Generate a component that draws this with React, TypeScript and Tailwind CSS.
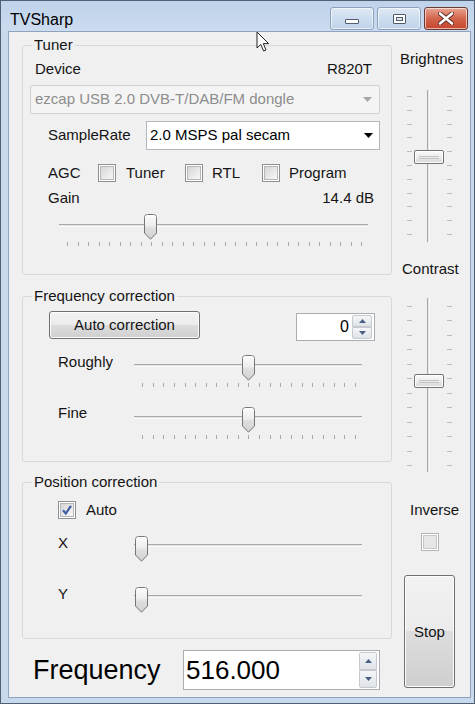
import React from "react";

// TVSharp main window, Vista basic look

function Thumb() {
  return (
    <svg width="13" height="26" viewBox="0 0 13 26" className="block">
      <defs>
        <linearGradient id="thumbFill" x1="0" y1="0" x2="0" y2="1">
          <stop offset="0" stopColor="#fbfbfb" />
          <stop offset="0.45" stopColor="#eeeeee" />
          <stop offset="0.55" stopColor="#dedede" />
          <stop offset="1" stopColor="#d2d2d2" />
        </linearGradient>
      </defs>
      <path
        d="M0.5 3.5 Q0.5 0.5 3.5 0.5 H9.5 Q12.5 0.5 12.5 3.5 V19 L6.5 25.2 L0.5 19 Z"
        fill="url(#thumbFill)"
        stroke="#767676"
      />
      <path d="M1.5 3.5 Q1.5 1.5 3.5 1.5 H9.5 Q11.5 1.5 11.5 3.5" fill="none" stroke="#ffffff" />
    </svg>
  );
}

function HSlider({
  className,
  ratio,
  ticks,
  trackTop,
}: {
  className: string;
  ratio: number;
  ticks: number;
  trackTop: number;
}) {
  return (
    <div className={"relative " + className}>
      <div
        className="absolute left-0 right-0 h-[3px] border-t border-[#a9a9a9] bg-[#e4e4e4] border-b border-b-[#fafafa]"
        style={{ top: trackTop }}
      />
      <div className="absolute top-0" style={{ left: `calc(8px + (100% - 14px) * ${ratio} - 7.5px)` }}>
        <Thumb />
      </div>
      {ticks > 0 && (
        <div className="absolute left-[8px] right-[6px] top-[28px] flex justify-between">
          {Array.from({ length: ticks }).map((_, i) => (
            <span key={i} className="h-[4px] w-[1px] bg-[#a8a8a8]" />
          ))}
        </div>
      )}
    </div>
  );
}

function VSlider({
  className,
  thumbTop,
  ticks,
  tickTop,
  tickBottom,
}: {
  className: string;
  thumbTop: number;
  ticks: number;
  tickTop: number;
  tickBottom: number;
}) {
  const marks = Array.from({ length: ticks });
  return (
    <div className={"relative w-[45px] " + className}>
      <div className="absolute bottom-0 left-[20px] top-0 w-[3px] border-l border-[#a9a9a9] bg-[#e4e4e4] border-r border-r-[#fafafa]" />
      <div className="absolute left-0 flex w-[5px] flex-col justify-between" style={{ top: tickTop, bottom: tickBottom }}>
        {marks.map((_, i) => (
          <span key={i} className="h-[1px] w-[5px] bg-[#bcbcbc]" />
        ))}
      </div>
      <div className="absolute left-[40px] flex w-[5px] flex-col justify-between" style={{ top: tickTop, bottom: tickBottom }}>
        {marks.map((_, i) => (
          <span key={i} className="h-[1px] w-[5px] bg-[#bcbcbc]" />
        ))}
      </div>
      <div
        className="absolute left-[7px] flex h-[14px] w-[30px] items-center justify-center rounded-[2px] border border-[#727272] bg-gradient-to-b from-[#fafafa] via-[#ececec] to-[#d6d6d6] shadow-[inset_0_0_0_1px_#ffffff]"
        style={{ top: thumbTop }}
      >
        <span className="h-[3px] w-[20px] border-y border-[#c4c4c4]" />
      </div>
    </div>
  );
}

function CheckBox({ checked, disabled }: { checked?: boolean; disabled?: boolean }) {
  return (
    <span
      className={
        "relative flex h-[18px] w-[18px] shrink-0 items-center justify-center border bg-white " +
        (disabled ? "border-[#b5b5b5]" : "border-[#8e8f8f]")
      }
    >
      <span
        className={
          "h-[14px] w-[14px] border " +
          (disabled
            ? "border-[#c9c9c9] bg-[#e6e6e6]"
            : "border-[#b3b8bd] bg-gradient-to-br from-[#d6d6d6] to-[#f7f7f7]")
        }
      />
      {checked && (
        <svg width="14" height="14" viewBox="0 0 14 14" className="absolute left-[1px] top-[1px]">
          <path d="M3 7.2 L5.8 10.5 L11 2.8" fill="none" stroke="#3f5ea4" strokeWidth="2.2" />
        </svg>
      )}
    </span>
  );
}

function GroupBox({
  title,
  className,
  children,
}: {
  title: string;
  className: string;
  children: React.ReactNode;
}) {
  return (
    <div className={"relative rounded-[3px] border border-[#d6dadd] " + className}>
      <span className="absolute left-[9px] top-[-10px] bg-[#f0f0f0] px-[2px] leading-[18px]">{title}</span>
      {children}
    </div>
  );
}

function Arrow({ color }: { color: string }) {
  return (
    <svg width="9" height="5" viewBox="0 0 9 5">
      <path d="M0 0 H9 L4.5 5 Z" fill={color} />
    </svg>
  );
}

function SpinHalf({ up, className }: { up?: boolean; className: string }) {
  return (
    <div
      className={
        "flex flex-1 items-center justify-center border border-[#c6cad0] bg-gradient-to-b from-[#f4f6f8] to-[#dfe3e8] " +
        className
      }
    >
      <svg width="7" height="4" viewBox="0 0 7 4">
        <path d={up ? "M0 4 L3.5 0 L7 4 Z" : "M0 0 L3.5 4 L7 0 Z"} fill="#4a5f86" />
      </svg>
    </div>
  );
}

function CaptionButton({ kind }: { kind: "min" | "max" | "close" }) {
  const base = "flex h-[23px] items-center justify-center rounded-[3px] border shadow-[inset_0_0_0_1px_rgba(255,255,255,0.6)] ";
  if (kind === "close") {
    return (
      <div className={base + "w-[44px] border-[#6d3a32] bg-gradient-to-b from-[#e8a593] via-[#d3654c] to-[#c5452c]"}>
        <svg width="16" height="13" viewBox="0 0 16 13">
          <path d="M2 1.5 L14 11.5 M14 1.5 L2 11.5" stroke="#5a2a22" strokeWidth="4.4" strokeLinecap="round" />
          <path d="M2 1.5 L14 11.5 M14 1.5 L2 11.5" stroke="#ffffff" strokeWidth="2.6" strokeLinecap="round" />
        </svg>
      </div>
    );
  }
  return (
    <div className={base + "w-[44px] border-[#8da2bc] bg-gradient-to-b from-[#dfe9f5] via-[#cddcee] to-[#c2d3e9]"}>
      {kind === "min" ? (
        <span className="mt-[6px] h-[5px] w-[14px] rounded-[1px] border border-[#505b6a] bg-white" />
      ) : (
        <span className="flex h-[10px] w-[13px] items-center justify-center rounded-[1px] border border-[#505b6a] bg-white">
          <span className="h-[4px] w-[7px] border border-[#505b6a] bg-[#dfe7f1]" />
        </span>
      )}
    </div>
  );
}

function WinButton({ className, children }: { className: string; children: React.ReactNode }) {
  return (
    <div
      className={
        "flex items-center justify-center rounded-[3px] border border-[#707070] bg-[linear-gradient(#f2f2f2_0%,#ebebeb_50%,#dddddd_50%,#cfcfcf_100%)] shadow-[inset_0_0_0_1px_#fcfcfc] " +
        className
      }
    >
      {children}
    </div>
  );
}

export default function App() {
  return (
    <div className="relative flex h-[704px] w-[475px] flex-col overflow-hidden border border-[#4f6072] bg-[#c8d9ed] font-['Liberation_Sans',Arial,sans-serif] text-[15px] text-[#141414]">
      {/* Title bar */}
      <div className="flex h-[30px] shrink-0 items-start bg-gradient-to-b from-[#bed2ea] to-[#cddcef] pl-[9px] pr-[6px]">
        <span className="mt-[9px] text-[16px] leading-[20px] text-black">TVSharp</span>
        <div className="ml-auto mt-[6px] flex gap-[3px]">
          <CaptionButton kind="min" />
          <CaptionButton kind="max" />
          <CaptionButton kind="close" />
        </div>
      </div>

      {/* Client area */}
      <div className="mb-[5px] ml-[7px] mr-[3px] flex flex-1 border border-[#8ea3bd] bg-[#f0f0f0]">
        {/* Left column */}
        <div className="flex w-[383px] flex-col pl-[13px] pt-[13px]">
          <GroupBox title="Tuner" className="h-[230px] w-[370px]">
            <div className="flex justify-between pl-[12px] pr-[19px] pt-[14px] leading-[18px]">
              <span>Device</span>
              <span>R820T</span>
            </div>
            <div className="ml-[7px] mt-[7px] flex h-[29px] w-[350px] items-center justify-between rounded-[2px] border border-[#cfcfcf] bg-[#f4f4f4] pl-[4px] pr-[7px] text-[#8d8d8d]">
              <span>ezcap USB 2.0 DVB-T/DAB/FM dongle</span>
              <Arrow color="#a6a6a6" />
            </div>
            <div className="mt-[7px] flex items-center pl-[25px]">
              <span className="w-[98px]">SampleRate</span>
              <div className="flex h-[29px] w-[234px] items-center justify-between border border-[#b4b7bd] bg-white pl-[3px] pr-[6px] text-black">
                <span>2.0 MSPS pal secam</span>
                <Arrow color="#000000" />
              </div>
            </div>
            <div className="mt-[14px] flex h-[18px] items-center pl-[25px] leading-[18px]">
              <span className="w-[50px]">AGC</span>
              <div className="flex w-[87px] items-center gap-[10px]">
                <CheckBox />
                <span>Tuner</span>
              </div>
              <div className="flex w-[77px] items-center gap-[9px]">
                <CheckBox />
                <span>RTL</span>
              </div>
              <div className="flex items-center gap-[9px]">
                <CheckBox />
                <span>Program</span>
              </div>
            </div>
            <div className="mt-[7px] flex justify-between pl-[25px] pr-[17px] leading-[18px]">
              <span>Gain</span>
              <span>14.4 dB</span>
            </div>
            <HSlider className="ml-[36px] mt-[7px] h-[33px] w-[309px]" ratio={8 / 28} ticks={29} trackTop={10} />
          </GroupBox>

          <GroupBox title="Frequency correction" className="mt-[21px] h-[166px] w-[370px]">
            <div className="flex items-start pl-[26px] pr-[16px] pt-[14px]">
              <WinButton className="h-[28px] w-[151px]">
                <span>Auto correction</span>
              </WinButton>
              <div className="ml-auto mt-[2px] flex h-[28px] w-[79px] items-center border border-[#abadb3] bg-white">
                <span className="flex-1 pr-[3px] text-right text-[16px] text-black">0</span>
                <div className="mr-[2px] flex h-[24px] w-[20px] flex-col">
                  <SpinHalf up className="rounded-t-[2px]" />
                  <SpinHalf className="rounded-b-[2px]" />
                </div>
              </div>
            </div>
            <div className="mt-[14px] flex items-start pl-[35px]">
              <span className="-mt-[2px] w-[76px] leading-[18px]">Roughly</span>
              <HSlider className="h-[33px] w-[228px]" ratio={0.5} ticks={21} trackTop={9} />
            </div>
            <div className="mt-[19px] flex items-start pl-[35px]">
              <span className="-mt-[3px] w-[76px] leading-[18px]">Fine</span>
              <HSlider className="h-[33px] w-[228px]" ratio={0.5} ticks={21} trackTop={9} />
            </div>
          </GroupBox>

          <GroupBox title="Position correction" className="mt-[20px] h-[157px] w-[370px]">
            <div className="flex items-center pl-[35px] pt-[18px] leading-[18px]">
              <CheckBox checked />
              <span className="ml-[10px]">Auto</span>
            </div>
            <div className="mt-[17px] flex items-start pl-[35px]">
              <span className="-mt-[2px] w-[76px] leading-[18px]">X</span>
              <HSlider className="h-[25px] w-[228px]" ratio={0} ticks={0} trackTop={8} />
            </div>
            <div className="mt-[26px] flex items-start pl-[35px]">
              <span className="-mt-[2px] w-[76px] leading-[18px]">Y</span>
              <HSlider className="h-[25px] w-[228px]" ratio={0} ticks={0} trackTop={8} />
            </div>
          </GroupBox>

          <div className="mt-[11px] flex items-center pl-[11px]">
            <span className="w-[150px] text-[27px] leading-[32px] text-black">Frequency</span>
            <div className="flex h-[40px] w-[197px] items-center border border-[#abadb3] bg-white pl-[2px]">
              <span className="flex-1 text-[26px] leading-[30px] text-black">516.000</span>
              <div className="mr-[2px] flex h-[36px] w-[18px] flex-col">
                <SpinHalf up className="rounded-t-[2px]" />
                <SpinHalf className="rounded-b-[2px]" />
              </div>
            </div>
          </div>
        </div>

        {/* Right column */}
        <div className="flex flex-1 flex-col items-start pt-[18px] leading-[18px]">
          <span className="ml-[8px]">Brightnes</span>
          <VSlider className="ml-[15px] mt-[22px] h-[152px]" thumbTop={60} ticks={11} tickTop={6} tickBottom={7} />
          <span className="ml-[10px] mt-[18px]">Contrast</span>
          <VSlider className="ml-[15px] mt-[20px] h-[174px]" thumbTop={76} ticks={12} tickTop={8} tickBottom={6} />
          <span className="ml-[18px] mt-[29px]">Inverse</span>
          <div className="ml-[29px] mt-[14px]">
            <CheckBox disabled />
          </div>
          <WinButton className="ml-[12px] mt-[24px] h-[113px] w-[51px]">
            <span>Stop</span>
          </WinButton>
        </div>
      </div>

      {/* mouse pointer */}
      <svg width="14" height="22" viewBox="0 0 14 22" className="absolute left-[255px] top-[30px]">
        <path d="M1 1 V17 L4.8 13.4 L7.6 20 L10 19 L7.3 12.6 H12.6 Z" fill="#ffffff" stroke="#222222" strokeWidth="1" strokeLinejoin="round" />
      </svg>
    </div>
  );
}
